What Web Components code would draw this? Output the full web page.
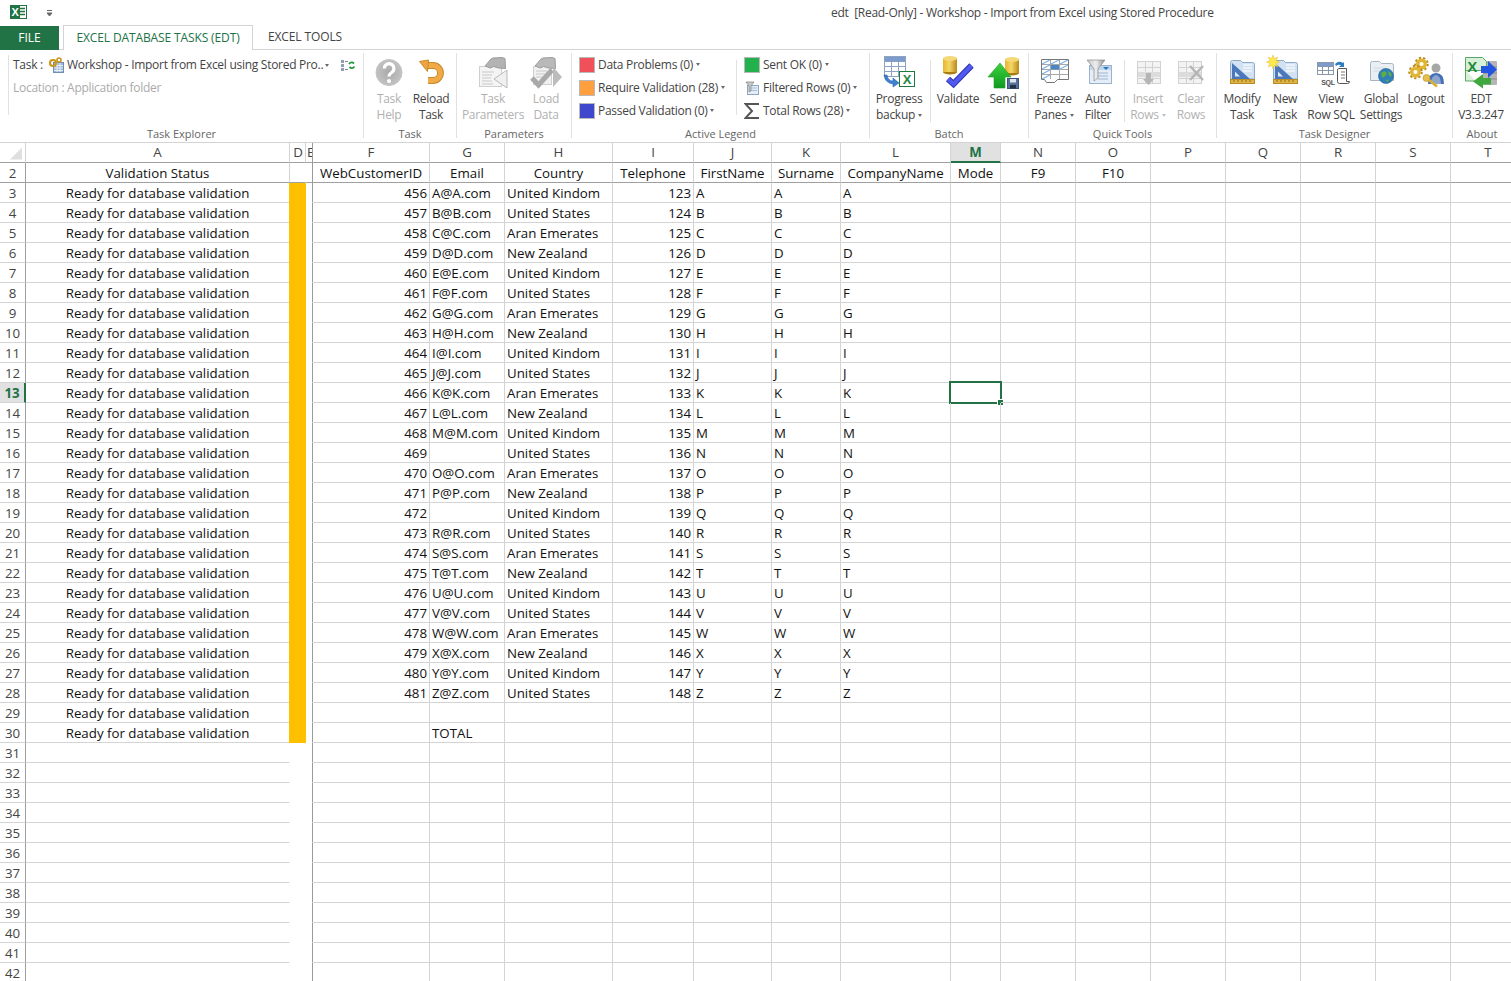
<!DOCTYPE html>
<html>
<head>
<meta charset="utf-8">
<title>edt</title>
<style>
  html, body { margin: 0; padding: 0; background: #fff; overflow: hidden; }
  body { width: 1511px; height: 981px; font-family: "Open Sans", "Liberation Sans", sans-serif; font-size: 12px; color: #444; }
</style>
</head>
<body>
<xl-titlebar>edt&nbsp; [Read-Only] - Workshop - Import from Excel using Stored Procedure</xl-titlebar>
<xl-tabs></xl-tabs>
<xl-ribbon>
  <rb-group label="Task Explorer" w="364"><task-explorer></task-explorer></rb-group>
  <rb-group label="Task" w="93" pad="4">
    <rb-button w="42" icon="help" off>Task<br>Help</rb-button>
    <rb-button w="42" icon="reload">Reload<br>Task</rb-button>
  </rb-group>
  <rb-group label="Parameters" w="115" pad="6">
    <rb-button w="60" icon="params" off>Task<br>Parameters</rb-button>
    <rb-button w="46" icon="load" off>Load<br>Data</rb-button>
  </rb-group>
  <rb-group label="Active Legend" w="298">
    <legend-col w="164" pad="7">
      <legend-item color="#f0505a">Data Problems (0)</legend-item>
      <legend-item color="#ff9f3f">Require Validation (28)</legend-item>
      <legend-item color="#3f48cc">Passed Validation (0)</legend-item>
    </legend-col>
    <rb-sep h="55" top="7"></rb-sep>
    <legend-col w="130" pad="7">
      <legend-item color="#22b14c">Sent OK (0)</legend-item>
      <legend-item icon="filter">Filtered Rows (0)</legend-item>
      <legend-item icon="sigma">Total Rows (28)</legend-item>
    </legend-col>
  </rb-group>
  <rb-group label="Batch" w="159">
    <rb-button w="58" icon="progress">Progress<br>backup<x-caret></x-caret></rb-button>
    <rb-sep h="62" top="7" ml="2" mr="1"></rb-sep>
    <rb-button w="52" icon="validate">Validate</rb-button>
    <rb-button w="38" icon="send">Send</rb-button>
  </rb-group>
  <rb-group label="Quick Tools" w="188">
    <rb-button w="50" icon="freeze">Freeze<br>Panes<x-caret></x-caret></rb-button>
    <rb-button w="38" icon="autofilter">Auto<br>Filter</rb-button>
    <rb-sep h="62" top="7" ml="7"></rb-sep>
    <rb-button w="46" icon="insert" off>Insert<br>Rows<x-caret></x-caret></rb-button>
    <rb-button w="40" icon="clear" off>Clear<br>Rows</rb-button>
  </rb-group>
  <rb-group label="Task Designer" w="236">
    <rb-button w="50" icon="modify">Modify<br>Task</rb-button>
    <rb-button w="36" icon="newtask">New<br>Task</rb-button>
    <rb-button w="56" icon="viewsql">View<br>Row SQL</rb-button>
    <rb-button w="44" icon="global">Global<br>Settings</rb-button>
    <rb-button w="46" icon="logout">Logout</rb-button>
  </rb-group>
  <rb-group label="About" w="58" last>
    <rb-button w="56" icon="edt">EDT<br>V3.3.247</rb-button>
  </rb-group>
</xl-ribbon>
<xl-sheet></xl-sheet>

<script>
const UI_FONT = '"Open Sans", "Liberation Sans", sans-serif';

// small table drawing used by several ribbon icons
function tbl(x, y, w, h, cols, rows, stroke, fill) {
  let s = `<rect x="${x}" y="${y}" width="${w}" height="${h}" fill="${fill}" stroke="${stroke}"/>`;
  for (let i = 1; i < cols; i++) {
    const px = x + Math.round(w * i / cols);
    s += `<path d="M${px} ${y}V${y + h}" stroke="${stroke}" fill="none"/>`;
  }
  for (let i = 1; i < rows; i++) {
    const py = y + Math.round(h * i / rows);
    s += `<path d="M${x} ${py}H${x + w}" stroke="${stroke}" fill="none"/>`;
  }
  return s;
}

function folder(x) {
  return `<path d="M${x + .5} 62.5q0-2 2-2h8l2 2h10q2 0 2 2v14.500h-24z" fill="#d3e2f2" stroke="#90abc9"/>
    <path d="M${x + 13} 65h9M${x + 13} 68h9M${x + 13} 71h9" stroke="#fff" stroke-width="1.200"/>
    <path d="M${x + 2} 63v16h18z" fill="#4a78bb"/>
    <path d="M${x + 5} 71.500v5h5z" fill="#dbe8f5"/>
    <rect x="${x + .5}" y="79.500" width="24" height="4" fill="#e0b445" stroke="#b88d28"/>
    <path d="M${x + 4} 80v2M${x + 8} 80v2M${x + 12} 80v2M${x + 16} 80v2M${x + 20} 80v2" stroke="#8a6a1c"/>`;
}

function hand(dx) {
  return `<path d="M${485 + dx} 66l6-7 2-1 9-.5 3 1 .5 10-7-.5-5-1.500-3 1.500z" fill="#b3b3b3" stroke="#9c9c9c"/>`;
}

function can(x, y, w, h) {
  return `<rect x="${x}" y="${y + 2}" width="${w}" height="${h - 4}" fill="url(#gold)"/>
    <ellipse cx="${x + w / 2}" cy="${y + h - 2}" rx="${w / 2}" ry="2.500" fill="#a97c10"/>
    <rect x="${x}" y="${y + 2}" width="${w}" height="${h - 4}" fill="url(#gold)"/>
    <ellipse cx="${x + w / 2}" cy="${y + 2.500}" rx="${w / 2}" ry="2.500" fill="#f5d878"/>`;
}

function gear(cx, cy) {
  return `<circle cx="${cx}" cy="${cy}" r="6.200" fill="none" stroke="#b98a18" stroke-width="2" stroke-dasharray="2.200 2.100"/>
    <circle cx="${cx}" cy="${cy}" r="3.800" fill="none" stroke="#e3b535" stroke-width="3.400"/>`;
}

const ICONS = {
  help: [389, `<circle cx="389" cy="72.500" r="13" fill="url(#grey)" stroke="#c4c4c4"/>
    <path d="M384.300 68.500a4.800 4.800 0 1 1 7.400 4c-1.900 1.200-2.700 2.100-2.700 4" fill="none" stroke="#fff" stroke-width="3.200"/>
    <circle cx="389" cy="81" r="2" fill="#fff"/>`],
  reload: [431, `<path d="M425 65.500h8a7.500 7.500 0 0 1 0 15h-5" fill="none" stroke="#c98a28" stroke-width="6.800"/>
    <path d="M425 65.500h8a7.500 7.500 0 0 1 0 15h-5" fill="none" stroke="#f0ab48" stroke-width="4.800"/>
    <path d="M419.500 61.500l9-1.500-1 11.500z" fill="#eda541" stroke="#c98a28"/>`],
  params: [493, `<rect x="479.500" y="66.500" width="22" height="20" fill="#f4f4f4" stroke="#cfcfcf"/>
    <path d="M482 72h12M482 75h10M482 78h9M482 81h10M482 84h11" stroke="#c9c9c9"/>
    ${hand(0)}
    <path d="M507 70v18l-13-9z" fill="#f0f0f0" stroke="#b9b9b9"/>`],
  load: [546, `<rect x="533.500" y="66.500" width="18" height="18" fill="#f1f1f1" stroke="#cfcfcf"/>
    <path d="M536 71h11M536 74h10M536 77h11" stroke="#cacaca"/>
    ${hand(50).replace('fill="#b3b3b3"', 'fill="#b9b9b9"')}
    <path d="M532 78l6.500 7 13.500-15" fill="none" stroke="#a9a9a9" stroke-width="5"/>
    <path d="M553 67l9 10-9 10z" fill="#bcbcbc"/>`],
  progress: [899, `${tbl(884.5, 56.5, 21, 20, 3, 4, '#8ea3c4', '#fff')}
    <rect x="885" y="57" width="20" height="4.500" fill="#7d9bcb"/>
    <path d="M887 75q1 6 6 6v-3l6 5-6 4v-3q-8-1-9-9z" fill="#3f7fd0" stroke="#2c66b0" stroke-width=".6"/>
    <rect x="899.500" y="71.500" width="15" height="15" fill="#fff" stroke="#1e7a3c"/>
    <text x="907" y="84" font-family="Liberation Sans" font-weight="700" font-size="13" text-anchor="middle" fill="#25893f">X</text>`],
  validate: [958, `${can(943, 56, 14, 18)}
    <path d="M948 79l5.500 5 18-18.500" fill="none" stroke="#2f35b5" stroke-width="6.200"/>
    <path d="M948 79l5.500 5 18-18.500" fill="none" stroke="#5259ee" stroke-width="4"/>`],
  send: [1003, `${can(1005, 57, 14, 18)}
    <path d="M988 77l12-14 11 14h-6v11h-11v-11z" fill="url(#grn)" stroke="#2b9a2b" stroke-width=".6"/>
    <rect x="1007.500" y="78.500" width="11" height="10" fill="#56709c" stroke="#3c5278"/>
    <rect x="1010" y="79" width="6" height="3.500" fill="#dfe6f0"/>
    <rect x="1010" y="85" width="6" height="3.500" fill="#22304a"/>`],
  freeze: [1054, `<path d="M1041.500 59.500h27v20h-11l-3 3h-8l-2-3h-3z" fill="#fff" stroke="#777"/>
    <path d="M1042 64.500h26M1042 69.500h26M1042 74.500h26M1050.500 60v19M1059.500 60v19" stroke="#a8a8a8"/>
    <path d="M1042 64l8-4M1051 64l8-4M1060 64l8-4M1042 69l8-4M1042 74l8-4M1042 79l8-4M1060 69l8-4" stroke="#7fb3e0" stroke-width="1.300"/>
    <rect x="1051" y="65" width="8" height="4.500" fill="#4a86c5"/>`],
  autofilter: [1098, `<rect x="1089.500" y="65.500" width="22" height="18" fill="#e3eef8" stroke="#9bb3cc"/>
    <rect x="1090" y="66" width="21" height="4" fill="#c0d6ec"/>
    <path d="M1098 73h10M1098 76h10M1098 79h10" stroke="#9db6d0"/>
    <path d="M1087 60h18l-7 9v9l-4 3v-12z" fill="url(#grey2)" stroke="#8d8d8d" stroke-width=".7"/>
    <path d="M1103 67h6l-3 3z" fill="#2f74c0"/>`],
  insert: [1148, `${tbl(1137.5, 61.5, 23, 22, 3, 4, '#d2d2d2', '#f3f3f3')}
    <rect x="1138" y="72" width="22" height="5" fill="#dcdcdc"/>
    <path d="M1146 73h5v6h3l-5.500 6-5.500-6h3z" fill="#b5b5b5"/>`],
  clear: [1191, `${tbl(1178.5, 61.5, 23, 22, 3, 4, '#d2d2d2', '#f3f3f3')}
    <rect x="1179" y="72" width="22" height="5" fill="#dcdcdc"/>
    <path d="M1190 66l13 14M1203 66l-13 14" stroke="#b5b5b5" stroke-width="2.400"/>`],
  modify: [1242, folder(1230)],
  newtask: [1285, `${folder(1273)}
    <path d="M1273 55l1.300 3.500 3.500-1.300-1.700 3.300 3.400 1.500-3.400 1.500 1.700 3.300-3.500-1.300-1.300 3.500-1.300-3.500-3.500 1.300 1.700-3.300-3.400-1.500 3.400-1.500-1.700-3.300 3.500 1.300z" fill="#ffe94d" stroke="#e2b93a" stroke-width=".5"/>`],
  viewsql: [1331, `${tbl(1317.5, 62.5, 16, 12, 3, 3, '#8a97a8', '#fff')}
    <rect x="1318" y="63" width="15" height="3" fill="#7d9bcb"/>
    <path d="M1335 64q4-4 8-1l1-1v5h-5l2-2q-3-1-5 1z" fill="#2c7cc0"/>
    <path d="M1338.500 68.500h8v13h3q0 2-2 2h-8q-2 0-2-2v-11q0-2 1-2z" fill="#fff" stroke="#555"/>
    <path d="M1341 72h4M1341 75h4M1341 78h4" stroke="#777"/>
    <text x="1328" y="84.500" font-family="Liberation Sans" font-weight="700" font-size="7" text-anchor="middle" fill="#555">SQL</text>`],
  global: [1381, `<path d="M1370.500 63.500q0-2 2-2h7l2 2h10q2 0 2 2v15h-23z" fill="#e9eff5" stroke="#a8b4c0"/>
    <path d="M1374 68h12M1374 71h9" stroke="#cfd8e2"/>
    <circle cx="1386" cy="76" r="7.500" fill="#2f7fb8" stroke="#1e5f8c" stroke-width=".6"/>
    <path d="M1381 73q3-3 5-1t-1 4q-1 3-3 1zM1388 71q3 1 4 4l-2 2q-2-3-2-6zM1386 80q2-1 3 0l-2 2z" fill="#5fae45"/>`],
  logout: [1426, `${gear(1421.5, 64)}${gear(1415.5, 72)}
    <circle cx="1436" cy="68" r="4.500" fill="#a7a7a7"/>
    <path d="M1428 84q0-11 8-11t8 11z" fill="#4470b8"/>
    <path d="M1431 84q0-8 5-9 5 1 5 9z" fill="#8fa6cc"/>
    <circle cx="1426.500" cy="78" r="3.500" fill="#e6c04a" stroke="#b58f20" stroke-width=".6"/>
    <path d="M1429 80l8 6.500" stroke="#d8b038" stroke-width="2.800"/>`],
  edt: [1481, `<rect x="1483" y="61" width="14" height="24" rx="1" fill="#b5b5b5"/>
    <path d="M1483 67h14M1483 73h14M1483 79h14" stroke="#8d8d8d"/>
    <path d="M1465.500 57.500h17l4 4v9h-21z" fill="#d8efd8" stroke="#58a668"/>
    <path d="M1465.500 70v11h10" fill="#d8efd8" stroke="#58a668"/>
    <text x="1472" y="72" font-family="Liberation Sans" font-weight="700" font-size="15" text-anchor="middle" fill="#1f8a3c">X</text>
    <path d="M1481 66h7v-5l9 8.500-9 8.500v-5h-7z" fill="#2356e0"/>
    <path d="M1491 78h-8v-4l-10 7.500 10 7v-4h8z" fill="#3ea83e"/>`]
};

const GRADS = `<defs>
  <linearGradient id="gold" x1="0" x2="1" y1="0" y2="0"><stop offset="0" stop-color="#e8b52c"/><stop offset=".45" stop-color="#f4d668"/><stop offset="1" stop-color="#b98a18"/></linearGradient>
  <linearGradient id="grn" x1="0" x2="0" y1="0" y2="1"><stop offset="0" stop-color="#3fd23f"/><stop offset="1" stop-color="#0e9a1e"/></linearGradient>
  <radialGradient id="grey"><stop offset="0" stop-color="#a9a9a9"/><stop offset="1" stop-color="#c2c2c2"/></radialGradient>
  <linearGradient id="grey2" x1="0" x2="1" y1="0" y2="0"><stop offset="0" stop-color="#c4c4c4"/><stop offset=".5" stop-color="#eee"/><stop offset="1" stop-color="#8c8c8c"/></linearGradient>
</defs>`;

class XlTitlebar extends HTMLElement {
  connectedCallback() {
    this.attachShadow({ mode: "open" }).innerHTML = `
    <style>
      :host { display: flex; height: 25px; align-items: center; position: relative; font: 12px ${UI_FONT}; letter-spacing: -.28px; color: #444; }
      #logo { width: 18px; height: 18px; margin: 0 0 0 9px; }
      #qat { width: 7px; height: 8px; margin: 0 0 0 19px; }
      #title { margin-left: 778px; white-space: nowrap; }
    </style>
    <svg id="logo" viewBox="0 0 18 18">
      <rect x="7.500" y="1.500" width="10" height="13" fill="#fff" stroke="#217346"/>
      <path d="M11 4.500h5M11 7.500h5M11 10.500h5" stroke="#217346" stroke-width="1.500"/>
      <rect x="1" y="1" width="10" height="14" fill="#217346"/>
      <text x="6" y="12" font-family="Liberation Sans" font-weight="700" font-size="11" text-anchor="middle" fill="#fff">X</text>
    </svg>
    <svg id="qat" viewBox="0 0 7 8"><path d="M1 1.500h5M1 4h5l-2.500 3z" stroke="#666" stroke-width="1" fill="#666"/></svg>
    <div id="title"><slot></slot></div>`;
  }
}

class XlTabs extends HTMLElement {
  connectedCallback() {
    this.attachShadow({ mode: "open" }).innerHTML = `
    <style>
      :host { display: flex; height: 25px; box-sizing: border-box; border-bottom: 1px solid #d4d4d4; font: 12px ${UI_FONT}; align-items: flex-end; }
      div { box-sizing: border-box; display: flex; align-items: center; justify-content: center; white-space: nowrap; padding-bottom: 1px; }
      #file { width: 59px; height: 24px; margin-bottom: -1px; background: #217346; color: #fff; }
      #on { width: 190px; height: 25px; margin: 0 0 -1px 4px; background: #fff; color: #217346; border: 1px solid #d4d4d4; border-bottom: 0; letter-spacing: -.12px; }
      #off { width: 104px; height: 24px; color: #444; letter-spacing: -.12px; }
    </style>
    <div id="file">FILE</div><div id="on">EXCEL DATABASE TASKS (EDT)</div><div id="off">EXCEL TOOLS</div>`;
  }
}

class XlRibbon extends HTMLElement {
  connectedCallback() {
    this.attachShadow({ mode: "open" }).innerHTML = `
    <style>
      :host { display: flex; box-sizing: border-box; height: 93px; padding: 3px 0 4px; border-bottom: 1px solid #d4d4d4; font: 12px/16px ${UI_FONT}; letter-spacing: -.28px; color: #444; overflow: hidden; }
    </style><slot></slot>`;
  }
}

class RbGroup extends HTMLElement {
  connectedCallback() {
    this.attachShadow({ mode: "open" }).innerHTML = `
    <style>
      :host { display: flex; flex-direction: column; box-sizing: border-box; height: 85px; flex: none; border-right: 1px solid #e1e1e1; width: ${this.getAttribute("w")}px; }
      :host([last]) { border-right: 0; }
      #body { display: flex; height: 73px; padding-left: ${this.getAttribute("pad") || 0}px; }
      #label { height: 12px; line-height: 16px; font-size: 11px; letter-spacing: 0; text-align: center; color: #666; white-space: nowrap; }
    </style>
    <div id="body"><slot></slot></div>
    <div id="label">${this.getAttribute("label")}</div>`;
  }
}

class RbButton extends HTMLElement {
  connectedCallback() {
    const [cx, art] = ICONS[this.getAttribute("icon")];
    this.attachShadow({ mode: "open" }).innerHTML = `
    <style>
      :host { display: flex; flex-direction: column; align-items: center; flex: none; box-sizing: border-box; padding-top: 1px; width: ${this.getAttribute("w")}px; text-align: center; white-space: nowrap; line-height: 16px; color: #444; }
      :host([off]) { color: #b1b1b1; }
      svg { display: block; width: 44px; height: 37px; flex: none; overflow: visible; }
    </style>
    <svg viewBox="${cx - 22} 54 44 37">${GRADS}${art}</svg>
    <div><slot></slot></div>`;
  }
}

class RbSep extends HTMLElement {
  connectedCallback() {
    const a = n => this.getAttribute(n) || 0;
    this.attachShadow({ mode: "open" }).innerHTML = `
    <style>
      :host { display: block; flex: none; width: 1px; height: ${a("h")}px; margin: ${a("top")}px ${a("mr")}px 0 ${a("ml")}px; background: #e1e1e1; }
    </style>`;
  }
}

class XCaret extends HTMLElement {
  connectedCallback() {
    this.attachShadow({ mode: "open" }).innerHTML = `
    <style>
      :host { display: inline-block; width: 0; height: 0; margin-left: 3px; vertical-align: 2px; border: 2.500px solid transparent; border-top: 3px solid currentColor; border-bottom: 0; opacity: .8; }
    </style>`;
  }
}

class LegendCol extends HTMLElement {
  connectedCallback() {
    this.attachShadow({ mode: "open" }).innerHTML = `
    <style>
      :host { display: flex; flex-direction: column; flex: none; box-sizing: border-box; width: ${this.getAttribute("w")}px; padding-left: ${this.getAttribute("pad")}px; }
    </style><slot></slot>`;
  }
}

class LegendItem extends HTMLElement {
  connectedCallback() {
    const color = this.getAttribute("color");
    const icons = {
      filter: `<svg viewBox="0 0 16 16"><rect x="3.500" y="5.500" width="11" height="9" fill="#e3eef8" stroke="#8ea6c0"/><path d="M5 8h8M5 10.500h8" stroke="#a8bdd3"/><path d="M2 2h8l-3 4v5l-2 1v-6z" fill="#c9c9c9" stroke="#808080" stroke-width=".7"/></svg>`,
      sigma: `<svg viewBox="0 0 16 16"><path d="M15 1H1.500L8 8l-6.500 7H15" fill="none" stroke="#555" stroke-width="2"/></svg>`
    };
    const mark = color ? `<i style="background:${color}"></i>` : icons[this.getAttribute("icon")];
    this.attachShadow({ mode: "open" }).innerHTML = `
    <style>
      :host { display: flex; align-items: center; height: 23px; white-space: nowrap; color: #444; }
      i { display: block; box-sizing: border-box; width: 16px; height: 16px; border: 1px solid #b9b9b9; flex: none; }
      svg { display: block; width: 16px; height: 16px; flex: none; }
      span { margin-left: 3px; }
    </style>${mark}<span><slot></slot></span><x-caret></x-caret>`;
  }
}

class TaskExplorer extends HTMLElement {
  connectedCallback() {
    this.attachShadow({ mode: "open" }).innerHTML = `
    <style>
      :host { display: block; box-sizing: border-box; width: 355px; height: 60px; margin: 2px 0 0 8px; padding: 1px 0 0 4px; border-left: 1px solid #e1e1e1; white-space: nowrap; }
      #top { display: flex; align-items: center; height: 18px; }
      #top svg { flex: none; }
      #task { width: 32px; }
      #loc { margin-top: 5px; height: 18px; line-height: 18px; color: #ababab; }
      #name { margin-left: 3px; width: 255px; }
      #sync { margin-left: 12px; }
    </style>
    <div id="top">
      <span id="task">Task :</span>
      <svg style="margin-left:3px" width="16" height="16" viewBox="0 0 16 16">
        <rect x="5.500" y="5.500" width="10" height="10" fill="#9db7d8" stroke="#6f8cb2"/>
        <path d="M6 8.500h9M6 11h9M6 13.500h9M9 6v9M12 6v9" stroke="#e8eef6"/>
        <circle cx="5" cy="6" r="3" fill="none" stroke="#c9971c" stroke-width="2.200"/>
        <circle cx="11" cy="3" r="2" fill="none" stroke="#c9971c" stroke-width="1.600"/>
      </svg>
      <span id="name">Workshop - Import from Excel using Stored Pro..</span>
      <x-caret></x-caret>
      <svg id="sync" width="14" height="13" viewBox="0 0 14 13">
        <path d="M0 1h3v3h-3zM0 5h3v3h-3zM0 9h3v3h-3z" fill="#8ea0b4"/>
        <path d="M4 2.500h3M4 10.500h3" stroke="#8a8a8a"/>
        <path d="M8 5q2.500-3 5-.5M13.500 7.500q-2.500 3-5 .5" fill="none" stroke="#1f9a3a" stroke-width="1.800"/>
      </svg>
    </div>
    <div id="loc">Location : Application folder</div>`;
  }
}

const COLS = [["A", 264], ["D", 16], ["E", 7], ["F", 117], ["G", 75], ["H", 108], ["I", 81], ["J", 78], ["K", 69], ["L", 110], ["M", 50], ["N", 75], ["O", 75], ["P", 75], ["Q", 75], ["R", 75], ["S", 75], ["T", 75]];
const HEADS = { A: "Validation Status", F: "WebCustomerID", G: "Email", H: "Country", I: "Telephone", J: "FirstName", K: "Surname", L: "CompanyName", M: "Mode", N: "F9", O: "F10" };
const COUNTRIES = ["United Kindom", "United States", "Aran Emerates", "New Zealand"];
const NO_EMAIL = [13, 16];

function rowData(i) {
  const ch = String.fromCharCode(65 + i);
  return {
    F: 456 + i,
    G: NO_EMAIL.includes(i) ? "" : `${ch}@${ch}.com`,
    H: COUNTRIES[i % 4],
    I: 123 + i,
    J: ch, K: ch, L: ch
  };
}

class XlSheet extends HTMLElement {
  connectedCallback() {
    let html = `<div class="c ch corner"><svg width="25" height="19"><path d="M10 16.500L22 4.500v12z" fill="#dfdfdf"/></svg></div>`;
    for (const [n] of COLS) {
      html += `<div class="c ch ${n} ${n === "M" ? "picked" : ""}">${n}</div>`;
    }
    for (let r = 2; r <= 42; r++) {
      html += `<div class="c rh ${r === 2 ? "dark" : ""} ${r === 13 ? "picked" : ""}">${r}</div>`;
      const data = r >= 3 && r <= 28 ? rowData(r - 3) : {};
      if (r === 30) data.G = "TOTAL";
      for (const [n] of COLS) {
        let cls = `c ${n}`;
        let text = data[n] ?? "";
        if (r === 2) { cls += " dark mid"; text = HEADS[n] || ""; }
        if (n === "A" && r > 2) {
          cls += " mid";
          if (r <= 30) text = "Ready for database validation";
        }
        if ((n === "F" || n === "I") && r > 2) cls += " num";
        if (n === "D" && r > 2) cls += r <= 30 ? " amber" : " blank";
        if (n === "E" && r > 2) cls += " blank";
        let sel = n === "M" && r === 13 ? `<b class="sel"></b><b class="grip"></b>` : "";
        html += `<div class="${cls}">${text}${sel}</div>`;
      }
    }
    this.attachShadow({ mode: "open" }).innerHTML = `
    <style>
      :host { display: block; height: 838px; overflow: hidden; font: 13.3px/21px "Open Sans", "Liberation Sans", sans-serif; color: #111; }
      #grid { display: grid; grid-template-columns: 26px ${COLS.map(c => c[1] + "px").join(" ")}; grid-auto-rows: 20px; width: 1526px; }
      .c { box-sizing: border-box; position: relative; padding: 0 2px; white-space: nowrap; border-right: 1px solid #d4d4d4; border-bottom: 1px solid #d4d4d4; }
      .ch, .rh { text-align: center; color: #444; padding: 0; }
      .ch { line-height: 19px; border-bottom-color: #a0a0a0; }
      .rh { border-right-color: #a0a0a0; }
      .corner svg { display: block; }
      .dark { border-bottom-color: #a0a0a0; }
      .mid { text-align: center; }
      .num { text-align: right; }
      .E { border-right-color: #9a9a9a; overflow: hidden; }
      .ch.D, .ch.E { overflow: hidden; }
      .ch.D { padding-left: 1px; }
      .ch.E { text-align: left; padding-left: 1px; }
      .blank { border-bottom-color: transparent; }
      .D.blank { border-right-color: transparent; }
      .D:not(.ch) { border-right-color: transparent; }
      .A.mid:not(.dark) { border-right-color: transparent; }
      .amber { background: #ffc000; margin-left: -1px; border: 0; }
      .picked { background: #e1e1e1; color: #217346; font-weight: 700; }
      .ch.picked { border-bottom: 2px solid #217346; }
      .rh.picked { border-right: 2px solid #217346; }
      .sel { position: absolute; left: -2px; top: -2px; width: 53px; height: 23px; box-sizing: border-box; border: 2px solid #217346; }
      .grip { position: absolute; left: 47px; top: 17px; width: 5px; height: 5px; background: #217346; outline: 1px solid #fff; }
    </style>
    <div id="grid">${html}</div>`;
  }
}

customElements.define("x-caret", XCaret);
customElements.define("xl-titlebar", XlTitlebar);
customElements.define("xl-tabs", XlTabs);
customElements.define("xl-ribbon", XlRibbon);
customElements.define("rb-group", RbGroup);
customElements.define("rb-button", RbButton);
customElements.define("rb-sep", RbSep);
customElements.define("legend-col", LegendCol);
customElements.define("legend-item", LegendItem);
customElements.define("task-explorer", TaskExplorer);
customElements.define("xl-sheet", XlSheet);
</script>
</body>
</html>
